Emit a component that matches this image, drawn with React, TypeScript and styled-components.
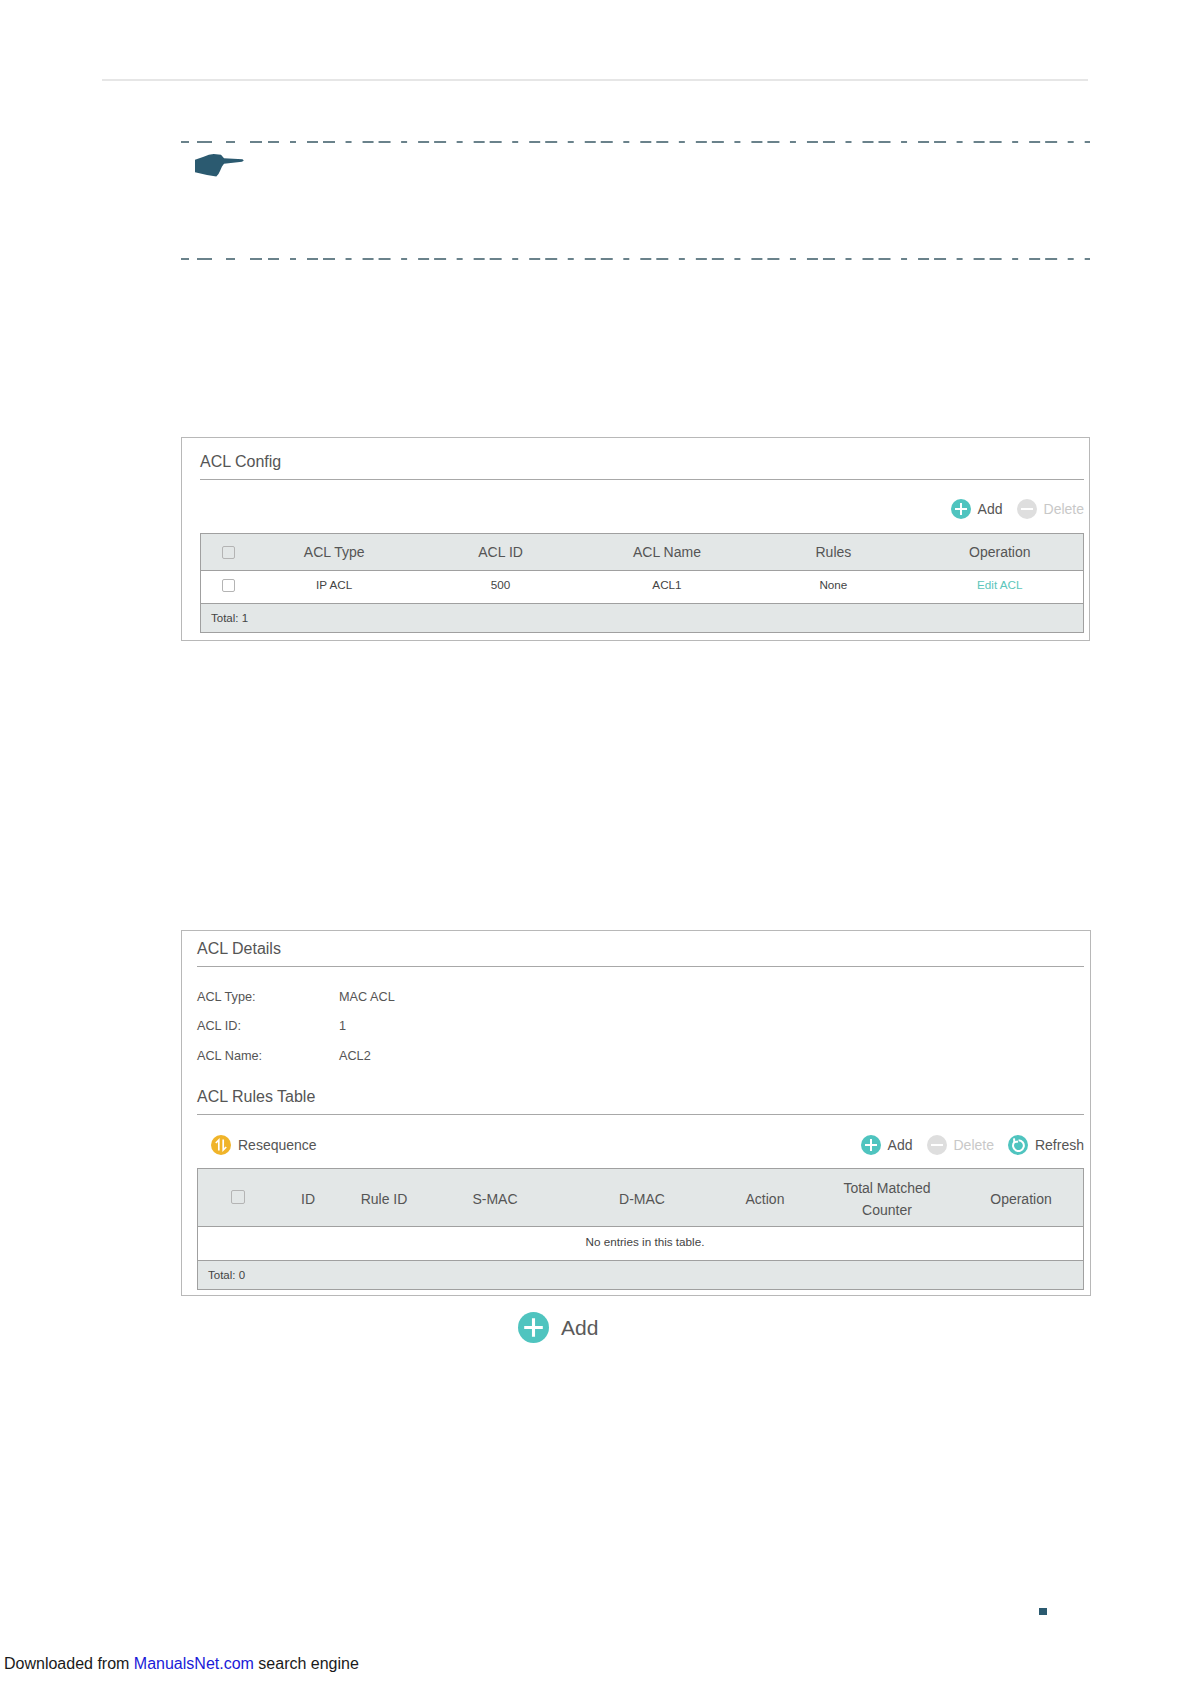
import React from 'react';
import styled, { createGlobalStyle } from 'styled-components';

const GlobalStyle = createGlobalStyle`
  html, body {
    margin: 0;
    background: #fff;
    font-family: 'Liberation Sans', Arial, sans-serif;
  }
`;

const getDashes = (): number[][] => {
  const dashes = [
    [0, 8],
    [16, 31],
    [45, 54],
    [69, 81],
    [87, 98],
  ];

  for (let i = 0; i < 15; i++) {
    const start = 109 + i * 55.55;
    dashes.push([start, start + 6]);
    dashes.push([start + 17, start + 28]);
    dashes.push([start + 33, start + 45]);
  }

  return dashes.filter((d) => d[0] < 909);
};

const DashLine: React.FC = () => (
  <DashSvg width='909' height='2' viewBox='0 0 909 2'>
    {getDashes().map((d) => (
      <line
        key={d[0]}
        x1={d[0]}
        x2={d[1]}
        y1='1'
        y2='1'
        stroke='#2a4c5a'
        strokeWidth='1.4'
      />
    ))}
  </DashSvg>
);

const HandIcon: React.FC = () => (
  <HandSvg width='49' height='23' viewBox='0 0 49 23'>
    <path
      d='M0 5.7 L8.7 2.7 Q14 0.2 18.7 0 L26 0.7 L29 4.3 L47.5 5.2 L48.8 6.6 L47 7.8 L29 9.8 L27 12.5 L25 17 Q23.5 21 21.3 22.4 L12 21 L0 18.3 Z'
      fill='#2b5a70'
    />
  </HandSvg>
);

type IconKind = 'add' | 'delete' | 'refresh' | 'resequence';

const CircleIcon: React.FC<{ kind: IconKind; size?: number }> = ({ kind, size = 20 }) => {
  const fill =
    kind === 'delete' ? '#dedede' : kind === 'resequence' ? '#f0b429' : '#4fc4bf';

  return (
    <IconSvg width={size} height={size} viewBox='0 0 20 20'>
      <circle cx='10' cy='10' r='10' fill={fill} />
      {kind === 'add' && (
        <path d='M10 4 V16 M4 10 H16' stroke='#fff' strokeWidth='2' fill='none' />
      )}
      {kind === 'delete' && <path d='M4 10 H16' stroke='#fff' strokeWidth='2' fill='none' />}
      {kind === 'refresh' && (
        <g fill='none' stroke='#fff' strokeWidth='2'>
          <path d='M6.4 7 A5.4 5.4 0 1 0 10.6 5.2' />
          <path d='M6 3.4 L6.4 7.2 L10 6.6' />
        </g>
      )}
      {kind === 'resequence' && (
        <g fill='none' stroke='#fff' strokeWidth='1.7'>
          <path d='M7.8 15.5 V5 L4.8 8' />
          <path d='M12.2 4.5 V15 L15.2 12' />
        </g>
      )}
    </IconSvg>
  );
};

const ToolButton: React.FC<{ kind: IconKind; label: string }> = ({ kind, label }) => (
  <Tool $disabled={kind === 'delete'}>
    <CircleIcon kind={kind} />
    {label}
  </Tool>
);

const configCols = '50px repeat(5, 1fr)';
const rulesCols = '79px 62px 90px 132px 162px 84px 160px 1fr';

export default function App() {
  return (
    <Page>
      <GlobalStyle />
      <TopRule />

      <Note>
        <DashLine />
        <HandIcon />
        <DashLine />
      </Note>

      <ConfigPanel>
        <PanelTitle $top={15}>ACL Config</PanelTitle>
        <Toolbar $top={5}>
          <ToolGroup>
            <ToolButton kind='add' label='Add' />
            <ToolButton kind='delete' label='Delete' />
          </ToolGroup>
        </Toolbar>
        <Table>
          <HeadRow $cols={configCols} $height={37}>
            <CheckCell $left={4}><CheckBox /></CheckCell>
            <Cell>ACL Type</Cell>
            <Cell>ACL ID</Cell>
            <Cell>ACL Name</Cell>
            <Cell>Rules</Cell>
            <Cell>Operation</Cell>
          </HeadRow>
          <BodyRow $cols={configCols}>
            <CheckCell $left={4}><CheckBox /></CheckCell>
            <Cell>IP ACL</Cell>
            <Cell>500</Cell>
            <Cell>ACL1</Cell>
            <Cell>None</Cell>
            <Cell><EditLink>Edit ACL</EditLink></Cell>
          </BodyRow>
          <TotalRow>Total: 1</TotalRow>
        </Table>
      </ConfigPanel>

      <DetailsPanel>
        <PanelTitle $top={9}>ACL Details</PanelTitle>
        <DetailGrid>
          <span>ACL Type:</span>
          <span>MAC ACL</span>
          <span>ACL ID:</span>
          <span>1</span>
          <span>ACL Name:</span>
          <span>ACL2</span>
        </DetailGrid>
        <PanelTitle $top={17}>ACL Rules Table</PanelTitle>
        <Toolbar $top={7} $between>
          <ResequenceWrap>
            <ToolButton kind='resequence' label='Resequence' />
          </ResequenceWrap>
          <ToolGroup>
            <ToolButton kind='add' label='Add' />
            <ToolButton kind='delete' label='Delete' />
            <ToolButton kind='refresh' label='Refresh' />
          </ToolGroup>
        </Toolbar>
        <Table>
          <HeadRow $cols={rulesCols} $height={58} $top={3}>
            <CheckCell $bottom={5}><CheckBox $big /></CheckCell>
            <Cell>ID</Cell>
            <Cell>Rule ID</Cell>
            <Cell>S-MAC</Cell>
            <Cell>D-MAC</Cell>
            <Cell>Action</Cell>
            <Cell>
              Total Matched
              <br />
              Counter
            </Cell>
            <OperationCell>Operation</OperationCell>
          </HeadRow>
          <EmptyRow>No entries in this table.</EmptyRow>
          <TotalRow>Total: 0</TotalRow>
        </Table>
      </DetailsPanel>

      <BigAdd>
        <CircleIcon kind='add' size={31} />
        Add
      </BigAdd>

      <PageMark />

      <Footer>
        Downloaded from <FooterLink>ManualsNet.com</FooterLink> search engine
      </Footer>
    </Page>
  );
}

const Page = styled.div`
  width: 1191px;
  height: 1684px;
  overflow: hidden;
  display: flex;
  flex-direction: column;
`;

const TopRule = styled.div`
  width: 986px;
  height: 2px;
  margin: 79px 0 0 102px;
  background: #e6e6e6;
`;

const Note = styled.div`
  width: 909px;
  height: 119px;
  margin: 60px 0 0 181px;
  display: flex;
  flex-direction: column;

  svg:last-child {
    margin-top: auto;
  }
`;

const DashSvg = styled.svg`
  display: block;
`;

const HandSvg = styled.svg`
  display: block;
  margin: 11px 0 0 14px;
`;

const IconSvg = styled.svg`
  flex-shrink: 0;
`;

const ConfigPanel = styled.section`
  box-sizing: border-box;
  width: 909px;
  height: 204px;
  margin: 177px 0 0 181px;
  padding: 0 5px 0 18px;
  border: 1px solid #b8b8b8;
`;

const DetailsPanel = styled.section`
  box-sizing: border-box;
  width: 910px;
  height: 366px;
  margin: 289px 0 0 181px;
  padding: 0 6px 0 15px;
  border: 1px solid #b8b8b8;
`;

const PanelTitle = styled.h2<{ $top: number }>`
  margin: 0;
  padding: ${(p) => p.$top}px 0 8px;
  border-bottom: 1px solid #a8a8a8;
  font-size: 16px;
  line-height: 18px;
  font-weight: normal;
  color: #555;
`;

const Toolbar = styled.div<{ $top: number; $between?: boolean }>`
  box-sizing: border-box;
  height: 53px;
  padding-top: ${(p) => p.$top}px;
  display: flex;
  align-items: center;
  justify-content: ${(p) => (p.$between ? 'space-between' : 'flex-end')};
`;

const ToolGroup = styled.div`
  display: flex;
  align-items: center;
  gap: 14px;
`;

const ResequenceWrap = styled.div`
  padding-left: 14px;
`;

const Tool = styled.div<{ $disabled?: boolean }>`
  display: flex;
  align-items: center;
  gap: 7px;
  font-size: 14px;
  color: ${(p) => (p.$disabled ? '#c8c8c8' : '#555')};
`;

const Table = styled.div`
  border: 1px solid #a0a0a0;
  font-size: 11.7px;
  color: #444;
`;

const HeadRow = styled.div<{ $cols: string; $height: number; $top?: number }>`
  box-sizing: border-box;
  display: grid;
  grid-template-columns: ${(p) => p.$cols};
  height: ${(p) => p.$height}px;
  padding-top: ${(p) => p.$top ?? 0}px;
  align-items: center;
  background: #e3e7e7;
  border-bottom: 1px solid #a0a0a0;
  font-size: 14px;
  line-height: 22px;
  color: #555;
`;

const BodyRow = styled.div<{ $cols: string }>`
  display: grid;
  grid-template-columns: ${(p) => p.$cols};
  height: 32px;
  align-items: center;
  border-bottom: 1px solid #a0a0a0;

  > div {
    padding-bottom: 5px;
  }
`;

const Cell = styled.div`
  text-align: center;
`;

const CheckCell = styled(Cell)<{ $left?: number; $bottom?: number }>`
  padding-left: ${(p) => p.$left ?? 0}px;
  padding-bottom: ${(p) => p.$bottom ?? 2}px;
`;

const OperationCell = styled(Cell)`
  padding-right: 8px;
`;

const EmptyRow = styled.div`
  box-sizing: border-box;
  height: 34px;
  padding: 0 0 3px 9px;
  border-bottom: 1px solid #a0a0a0;
  display: flex;
  align-items: center;
  justify-content: center;
`;

const TotalRow = styled.div`
  height: 28px;
  padding-left: 10px;
  display: flex;
  align-items: center;
  background: #e3e7e7;
  font-size: 11.5px;
`;

const CheckBox = styled.span<{ $big?: boolean }>`
  display: inline-block;
  box-sizing: border-box;
  width: ${(p) => (p.$big ? 14 : 13)}px;
  height: ${(p) => (p.$big ? 14 : 13)}px;
  vertical-align: middle;
  border: 1px solid #b4b4b4;
  border-radius: 2px;
`;

const EditLink = styled.span`
  color: #5cc6bb;
`;

const DetailGrid = styled.div`
  display: grid;
  grid-template-columns: 142px 1fr;
  grid-auto-rows: 29.5px;
  align-items: center;
  margin-top: 15px;
  font-size: 12.7px;
  color: #555;
`;

const BigAdd = styled.div`
  display: flex;
  align-items: center;
  gap: 12px;
  height: 31px;
  margin: 16px 0 0 518px;
  font-size: 21px;
  color: #5a5a5a;
`;

const PageMark = styled.div`
  width: 8px;
  height: 7px;
  margin: 265px 0 0 1039px;
  background: #2b5a70;
`;

const Footer = styled.div`
  margin: 39px 0 0 4px;
  font-size: 16px;
  line-height: 20px;
  color: #1a1a1a;
`;

const FooterLink = styled.span`
  color: #1a1ad8;
`;
